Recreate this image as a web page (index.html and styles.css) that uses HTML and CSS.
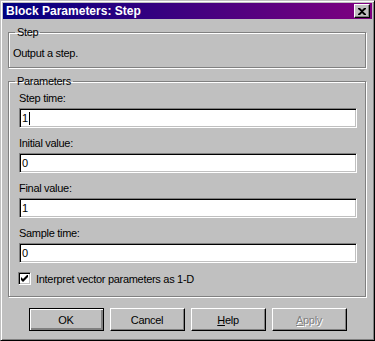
FILE: index.html
```html
<!DOCTYPE html>
<html lang="en">
<head>
    <meta charset="UTF-8">
    <title>Block Parameters: Step</title>
    <link rel="stylesheet" href="styles.css">
</head>
<body>
    <div class="window">
        <div class="titlebar">
            <span class="title">Block Parameters: Step</span>
            <span class="close">
                <svg width="8" height="7" viewBox="0 0 8 7">
                    <path d="M0 0h2l2 2 2-2h2v1l-3 2.5 3 2.5v1h-2l-2-2-2 2h-2v-1l3-2.5-3-2.5z" fill="#000"/>
                </svg>
            </span>
        </div>

        <div class="content">
            <fieldset class="group group-step">
                <legend>Step</legend>
                <p class="desc">Output a step.</p>
            </fieldset>

            <fieldset class="group group-params">
                <legend>Parameters</legend>

                <label class="field-label">Step time:</label>
                <div class="field"><span class="value">1</span><span class="caret"></span></div>

                <label class="field-label">Initial value:</label>
                <div class="field"><span class="value">0</span></div>

                <label class="field-label">Final value:</label>
                <div class="field"><span class="value">1</span></div>

                <label class="field-label">Sample time:</label>
                <div class="field"><span class="value">0</span></div>

                <div class="check-row">
                    <span class="checkbox">
                        <svg width="7" height="7" viewBox="0 0 7 7">
                            <path d="M0 2v3l2 2 5-5v-3l-5 5z" fill="#000"/>
                        </svg>
                    </span>
                    <span>Interpret vector parameters as 1-D</span>
                </div>
            </fieldset>

            <div class="buttons">
                <button class="btn btn-default">OK</button>
                <button class="btn">Cancel</button>
                <button class="btn"><u>H</u>elp</button>
                <button class="btn btn-disabled"><u>A</u>pply</button>
            </div>
        </div>
    </div>
</body>
</html>
```

FILE: styles.css
```css
body {
    margin: 0;
    font-family: "Liberation Sans", Arial, sans-serif;
    font-size: 11px;
    letter-spacing: -0.3px;
    background: #c0c0c0;
}

.window {
    width: 375px;
    height: 341px;
    box-sizing: border-box;
    background: #c0c0c0;
    border: 1px solid;
    border-color: #c0c0c0 #000 #000 #c0c0c0;
    box-shadow: inset 1px 1px #fff, inset -1px -1px #808080;
    padding: 2px;
}

/* title bar */
.titlebar {
    height: 16px;
    display: flex;
    align-items: center;
    justify-content: space-between;
    padding: 0 2px 0 2px;
    background: linear-gradient(to right, #000080, #800080);
    color: #fff;
}

.title {
    font-weight: bold;
    font-size: 12px;
    letter-spacing: 0;
    padding-left: 1px;
}

.close {
    width: 16px;
    height: 14px;
    box-sizing: border-box;
    background: #c0c0c0;
    border: 1px solid;
    border-color: #fff #000 #000 #fff;
    box-shadow: inset -1px -1px #808080;
    display: flex;
    align-items: center;
    justify-content: center;
}

.content {
    padding: 7px 6px 0 5px;
}

/* group boxes */
.group {
    margin: 0;
    border: 1px solid #808080;
    box-shadow: inset 1px 1px #fff, 1px 1px #fff;
    padding: 0 8px 0 10px;
}

.group legend {
    padding: 0 2px;
    margin-left: -4px;
    line-height: 13px;
}

.group-step {
    padding: 8px 8px 7px 4px;
}

.group-step legend {
    margin-left: 2px;
}

.desc {
    margin: 0;
    line-height: 13px;
}

.group-params {
    margin-top: 7px;
    padding-top: 4px;
    padding-bottom: 11px;
}

.field-label {
    display: block;
    line-height: 13px;
    margin-bottom: 3px;
}

.field {
    width: 338px;
    height: 20px;
    box-sizing: border-box;
    background: #fff;
    border: 1px solid;
    border-color: #808080 #fff #fff #808080;
    box-shadow: inset 1px 1px #000, inset -1px -1px #c0c0c0;
    display: flex;
    align-items: center;
    padding: 0 2px;
    margin-bottom: 9px;
}

.caret {
    width: 1px;
    height: 13px;
    background: #000;
    margin-left: 1px;
}

.check-row {
    display: flex;
    align-items: center;
    gap: 5px;
    margin-top: 3px;
    margin-left: -1px;
}

.checkbox {
    width: 13px;
    height: 13px;
    box-sizing: border-box;
    background: #fff;
    border: 1px solid;
    border-color: #808080 #fff #fff #808080;
    box-shadow: inset 1px 1px #000, inset -1px -1px #c0c0c0;
    display: flex;
    align-items: center;
    justify-content: center;
}

/* buttons */
.buttons {
    display: flex;
    justify-content: center;
    gap: 6px;
    margin-top: 11px;
    padding-left: 1px;
}

.btn {
    width: 75px;
    height: 23px;
    box-sizing: border-box;
    font-family: "Liberation Sans", Arial, sans-serif;
    font-size: 11px;
    letter-spacing: -0.3px;
    color: #000;
    background: #c0c0c0;
    border: 1px solid;
    border-color: #fff #000 #000 #fff;
    box-shadow: inset -1px -1px #808080;
    padding: 0;
}

.btn-default {
    border: 1px solid #000;
    box-shadow: inset 1px 1px #fff, inset -2px -2px #808080, inset -1px -1px #000;
}

.btn-disabled {
    color: #808080;
    text-shadow: 1px 1px #fff;
}
```
